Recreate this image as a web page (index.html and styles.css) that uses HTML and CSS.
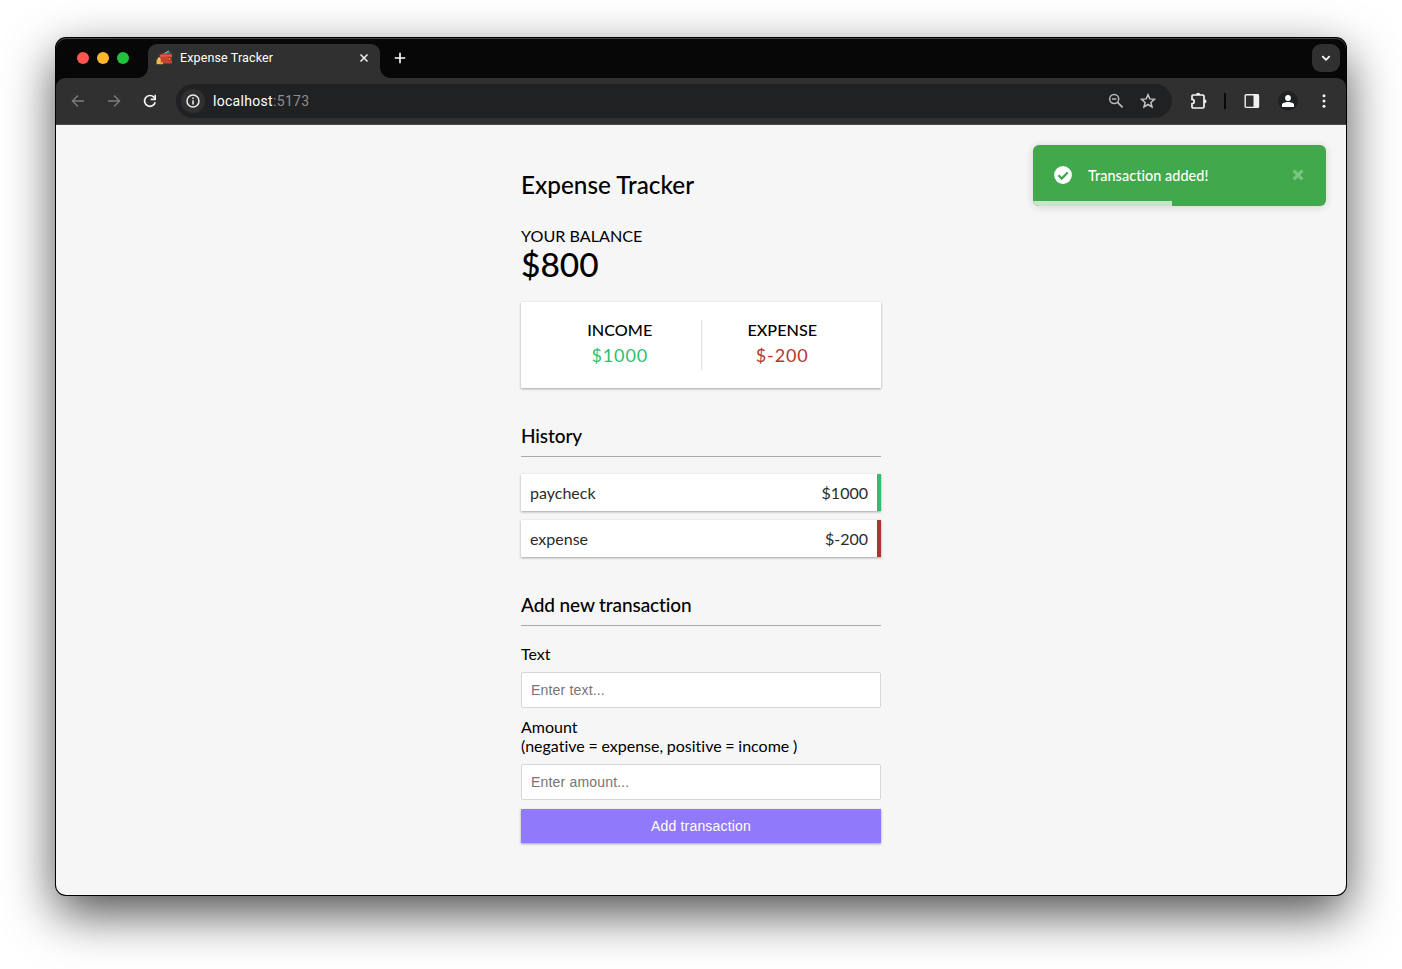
FILE: index.html
```html
<!DOCTYPE html>
<html lang="en">
<head>
<meta charset="utf-8">
<title>Expense Tracker</title>
<link rel="stylesheet" href="styles.css">
</head>
<body>
<div class="window">
  <div class="tabstrip">
    <div class="lights"><i class="light red"></i><i class="light yellow"></i><i class="light green"></i></div>
    <div class="tab">
      <svg class="favicon" width="17" height="16" viewBox="0 0 17 16">
        <path d="M7 4.500 13 .8l2.500 3.700z" fill="#2f7f86"/>
        <path d="M8 3.600 12.800 1" stroke="#7fd0c9" stroke-width="1"/>
        <path d="M10 4.300 15 1.800l1 2.500z" fill="#1d4f5c"/>
        <path d="M3.500 5 6 3.600h9.200l.8 1v9H4z" fill="#c7432f"/>
        <path d="M4 5.200h12v1.200H4z" fill="#e0674a"/>
        <path d="M12.300 7.300H16v3.200h-3.700z" fill="#9e2c22"/>
        <circle cx="13.400" cy="8.900" r=".8" fill="#f3b43c"/>
        <path d="M.6 9.500h4.200v4.700H.6z" fill="#f2b84a"/>
        <path d="M1.800 7.500h2.500v2.500H1.800z" fill="#f7cb6a"/>
        <path d="M4 12.300h3v1.900H4z" fill="#eaa63b"/>
      </svg>
      <span class="tab-title">Expense Tracker</span>
      <svg class="tab-close" width="10" height="10" viewBox="0 0 10 10"><path d="M1.500 1.500l7 7M8.500 1.500l-7 7" stroke="#f1f1f1" stroke-width="1.500"/></svg>
    </div>
    <svg class="newtab" width="12" height="12" viewBox="0 0 12 12"><path d="M6 .8v10.400M.8 6h10.400" stroke="#fff" stroke-width="1.600"/></svg>
    <div class="tabsearch"><svg width="10" height="8" viewBox="0 0 10 8"><path d="M1.300 2.200 5 5.800l3.700-3.600" fill="none" stroke="#fff" stroke-width="1.700"/></svg></div>
  </div>
  <div class="toolbar">
    <svg class="nav back" width="14" height="14" viewBox="0 0 14 14"><path d="M13 7H1.800M7 1.500 1.500 7 7 12.500" fill="none" stroke="#7c7c7c" stroke-width="1.500"/></svg>
    <svg class="nav forward" width="14" height="14" viewBox="0 0 14 14"><path d="M1 7h11.200M7 1.500 12.500 7 7 12.500" fill="none" stroke="#7c7c7c" stroke-width="1.500"/></svg>
    <svg class="nav reload" width="14" height="14" viewBox="0 0 14 14"><path d="M12.200 8.300A5.400 5.400 0 1 1 10.900 3.200L12 4.400" fill="none" stroke="#f4f4f4" stroke-width="1.700"/><path d="M13 .8v5.400H7.700V4.600h3.700V.8z" fill="#f4f4f4"/></svg>
    <div class="address">
      <span class="info"><svg width="14" height="14" viewBox="0 0 14 14"><circle cx="7" cy="7" r="6" fill="none" stroke="#eee" stroke-width="1.500"/><path d="M7 6.200v4.200M7 3.500v1.600" stroke="#eee" stroke-width="1.500"/></svg></span>
      <span class="url"><span class="host">localhost</span><span class="port">:5173</span></span>
      <svg class="lens" width="16" height="16" viewBox="0 0 16 16"><circle cx="6.200" cy="6" r="4.500" fill="none" stroke="#b9b9b9" stroke-width="1.500"/><path d="M9.600 9.400 14.600 14.400M4 6h4.400" stroke="#b9b9b9" stroke-width="1.700"/></svg>
      <svg class="star" width="16" height="16" viewBox="0 0 16 16"><path d="m8 1.700 1.800 4.200 4.700.4-3.600 3.100 1.100 4.600L8 11.500 4 14l1.100-4.600-3.600-3.100 4.700-.4z" fill="none" stroke="#c4c4c4" stroke-width="1.500"/></svg>
    </div>
    <svg class="puzzle" width="18" height="18" viewBox="0 0 18 18"><path d="M3 3h9.700q1.300 0 1.300 1.300v10.400q0 1.300-1.300 1.300H3q-1 0-1-1v-3.200a2.200 2.200 0 0 0 0-4.400V4q0-1 1-1z" fill="none" stroke="#f4f4f4" stroke-width="1.700"/><path d="M6 3a2.100 2.200 0 0 1 4.200 0zM14.300 7.200a2.200 2.100 0 0 1 0 4.200z" fill="#f4f4f4"/></svg>
    <i class="separator"></i>
    <svg class="panel" width="16" height="16" viewBox="0 0 16 16"><rect x="1.200" y="1.700" width="13.300" height="12.700" rx="1" fill="none" stroke="#f1f1f1" stroke-width="1.400"/><path d="M9.500 1.500h5v13h-5z" fill="#f1f1f1"/></svg>
    <span class="profile"><svg width="12" height="12" viewBox="0 0 12 12" fill="#fff"><circle cx="6" cy="3" r="2.900"/><path d="M0 12V9.800C0 8 3.500 7.100 6 7.100s6 .9 6 2.700V12z"/></svg></span>
    <svg class="menu" width="4" height="14" viewBox="0 0 4 14" fill="#f4f4f4"><circle cx="2" cy="1.700" r="1.500"/><circle cx="2" cy="7" r="1.500"/><circle cx="2" cy="12.300" r="1.500"/></svg>
  </div>
  <main class="page">
    <div class="container">
      <h2 class="title">Expense Tracker</h2>
      <h4 class="balance-label">YOUR BALANCE</h4>
      <h1 class="balance">$800</h1>
      <section class="summary">
        <div class="cell"><h4>INCOME</h4><p class="plus">$1000</p></div>
        <div class="cell"><h4>EXPENSE</h4><p class="minus">$-200</p></div>
      </section>
      <h3 class="heading">History</h3>
      <ul class="list">
        <li class="item income"><span>paycheck</span><span>$1000</span></li>
        <li class="item expense"><span>expense</span><span>$-200</span></li>
      </ul>
      <h3 class="heading">Add new transaction</h3>
      <form class="form">
        <label for="text">Text</label>
        <input id="text" type="text" placeholder="Enter text...">
        <label for="amount">Amount<br><span class="hint">(negative = expense, positive = income )</span></label>
        <input id="amount" type="text" placeholder="Enter amount...">
        <button type="button">Add transaction</button>
      </form>
    </div>
    <div class="toast">
      <svg width="18" height="18" viewBox="0 0 18 18"><circle cx="9" cy="9" r="8.900" fill="#fff"/><path d="m4.500 9.300 3.200 3.200 6-6" fill="none" stroke="#41a84c" stroke-width="2.300"/></svg>
      <span class="message">Transaction added!</span>
      <svg class="dismiss" width="12" height="12" viewBox="0 0 12 12"><path d="M1.700 1.700l8.600 8.600M10.300 1.700l-8.600 8.600" stroke="#7bc483" stroke-width="3.200"/></svg>
      <i class="progress"></i>
    </div>
  </main>
</div>
</body>
</html>
```
FILE: styles.css
```css
* { box-sizing: border-box; margin: 0; padding: 0; }

body {
  width: 1402px;
  height: 969px;
  padding: 38px 56px 0;
  overflow: hidden;
  background: #fff;
  font-family: Lato, sans-serif;
  font-variant-ligatures: none;
}

svg { display: block; flex: none; }

.window {
  display: flex;
  flex-direction: column;
  width: 1290px;
  height: 857px;
  border-radius: 10px;
  background: #070707;
  box-shadow: 0 0 0 1px #000, 0 18px 50px rgba(0, 0, 0, .7);
}

.tabstrip {
  display: flex;
  height: 40px;
  padding: 6px 6px 0 21px;
  border-radius: 10px 10px 0 0;
  background: #070707;
  box-shadow: inset 0 1px #444;
}

.lights { display: flex; gap: 8px; padding-top: 8px; }
.light { width: 12px; height: 12px; border-radius: 50%; }
.red { background: #ff5650; }
.yellow { background: #ffb52e; }
.green { background: #22c13b; }

.tab {
  position: relative;
  display: flex;
  width: 232px;
  margin-left: 19px;
  padding-left: 8px;
  border-radius: 9px 9px 0 0;
  background: #303030;
}

.tab::before,
.tab::after {
  content: "";
  position: absolute;
  bottom: 0;
  width: 10px;
  height: 10px;
}
.tab::before { left: -10px; background: radial-gradient(circle at 0 0, transparent 9.500px, #303030 10px); }
.tab::after { right: -10px; background: radial-gradient(circle at 100% 0, transparent 9.500px, #303030 10px); }

.favicon { margin-top: 6px; }
.tab-title {
  width: 168px;
  margin-left: 7px;
  color: #fff;
  font: 400 12.500px/28px Roboto, sans-serif;
  letter-spacing: .13px;
  white-space: nowrap;
}
.tab-close { margin: 9px 0 0 11px; }
.newtab { margin: 8px 0 0 14px; }

.tabsearch {
  display: flex;
  align-items: center;
  justify-content: center;
  width: 28px;
  height: 28px;
  margin-left: auto;
  border-radius: 9px;
  background: #303030;
}

.toolbar {
  display: flex;
  align-items: center;
  height: 47px;
  padding-left: 15px;
  border-bottom: 1px solid #4c4a4c;
  border-radius: 9px 9px 0 0;
  background: #303030;
}

.forward { margin-left: 22px; }
.reload { margin-left: 22px; }

.address {
  display: flex;
  align-items: center;
  width: 996px;
  height: 34px;
  margin-left: 19px;
  padding-left: 5px;
  border-radius: 17px;
  background: #202123;
}
.info {
  display: flex;
  align-items: center;
  justify-content: center;
  width: 24px;
  height: 24px;
  border-radius: 50%;
  background: #303030;
}
.url {
  margin-left: 8px;
  color: #fff;
  font: 14px/20px Roboto, sans-serif;
  letter-spacing: .35px;
}
.host { letter-spacing: .3px; }
.port { color: #8e8e8e; }
.lens { margin-left: auto; }
.star { margin: 0 16px; }

.puzzle { margin-left: 18px; }
.separator { width: 2px; height: 16px; margin-left: 16px; background: #080808; }
.panel { margin-left: 18px; }
.profile {
  display: flex;
  align-items: center;
  justify-content: center;
  width: 20px;
  height: 20px;
  margin-left: 18px;
  border-radius: 50%;
  background: #202123;
}
.menu { margin-left: 24px; }

.page {
  position: relative;
  flex: 1;
  border-radius: 0 0 10px 10px;
  background: #f6f6f6;
}

.container { width: 360px; margin: 0 auto; padding-top: 44px; color: #000; }

.title { font-size: 24.300px; font-weight: 500; line-height: 32px; }
.balance-label { margin-top: 25px; font-size: 16.150px; font-weight: 400; line-height: 20px; }
.balance { font-size: 33.500px; font-weight: 500; line-height: 36px; }

.summary {
  display: flex;
  height: 86px;
  margin-top: 20px;
  padding: 18px;
  background: #fff;
  box-shadow: 0 1px 3px rgba(0, 0, 0, .12), 0 1px 2px rgba(0, 0, 0, .24);
}
.cell { flex: 1; text-align: center; }
.cell + .cell { border-left: 1px solid #dedede; }
.cell h4 { font-size: 16.200px; font-weight: 500; line-height: 20px; }
.cell p { margin-top: 3px; font-size: 18px; line-height: 25px; letter-spacing: .9px; }
.plus { color: #2fc071; }
.minus { color: #b2382f; }

.heading {
  height: 34px;
  margin-top: 35px;
  border-bottom: 1px solid #aaa;
  font-size: 19px;
  font-weight: 500;
  line-height: 25px;
  letter-spacing: -.1px;
}

.list { display: grid; gap: 9px; margin-top: 17px; list-style: none; }
.item {
  display: flex;
  justify-content: space-between;
  height: 37px;
  padding: 0 9px;
  border-right: 4px solid;
  background: #fff;
  box-shadow: 0 1px 3px rgba(0, 0, 0, .12), 0 1px 2px rgba(0, 0, 0, .24);
  font-size: 16px;
  line-height: 38px;
}
.item span { color: #2b2b2b; }
.income { border-color: #2fbd70; }
.expense { border-color: #ae352e; }

.form { padding-top: 18px; }
.form label { display: block; font-size: 16px; line-height: 19px; }
.hint { word-spacing: -.4px; }
.form input {
  display: block;
  width: 360px;
  height: 36px;
  margin: 9px 0;
  padding: 0 9px;
  border: 1px solid #d6d6d6;
  border-radius: 2px;
  background: #fff;
  font: 14px "Liberation Sans", sans-serif;
  letter-spacing: .18px;
}
.form input::placeholder { color: #757575; }
.form button {
  display: block;
  width: 360px;
  height: 34px;
  border: 0;
  background: #9079fb;
  box-shadow: 0 1px 3px rgba(0, 0, 0, .12), 0 1px 2px rgba(0, 0, 0, .24);
  color: #fff;
  font: 14px "Liberation Sans", sans-serif;
  letter-spacing: .17px;
}

.toast {
  position: absolute;
  top: 20px;
  right: 20px;
  display: flex;
  align-items: center;
  width: 293px;
  height: 61px;
  padding: 0 22px 1px 21px;
  overflow: hidden;
  border-radius: 6px;
  background: #41a84c;
  box-shadow: 0 1px 9px rgba(0, 0, 0, .15);
  color: #fff;
  font-size: 14.400px;
}
.message { margin-left: 16px; font-weight: 500; letter-spacing: .06px; }
.dismiss { margin-left: auto; }
.progress { position: absolute; left: 0; bottom: 0; width: 139px; height: 5px; background: #c6e5c9; }
```
